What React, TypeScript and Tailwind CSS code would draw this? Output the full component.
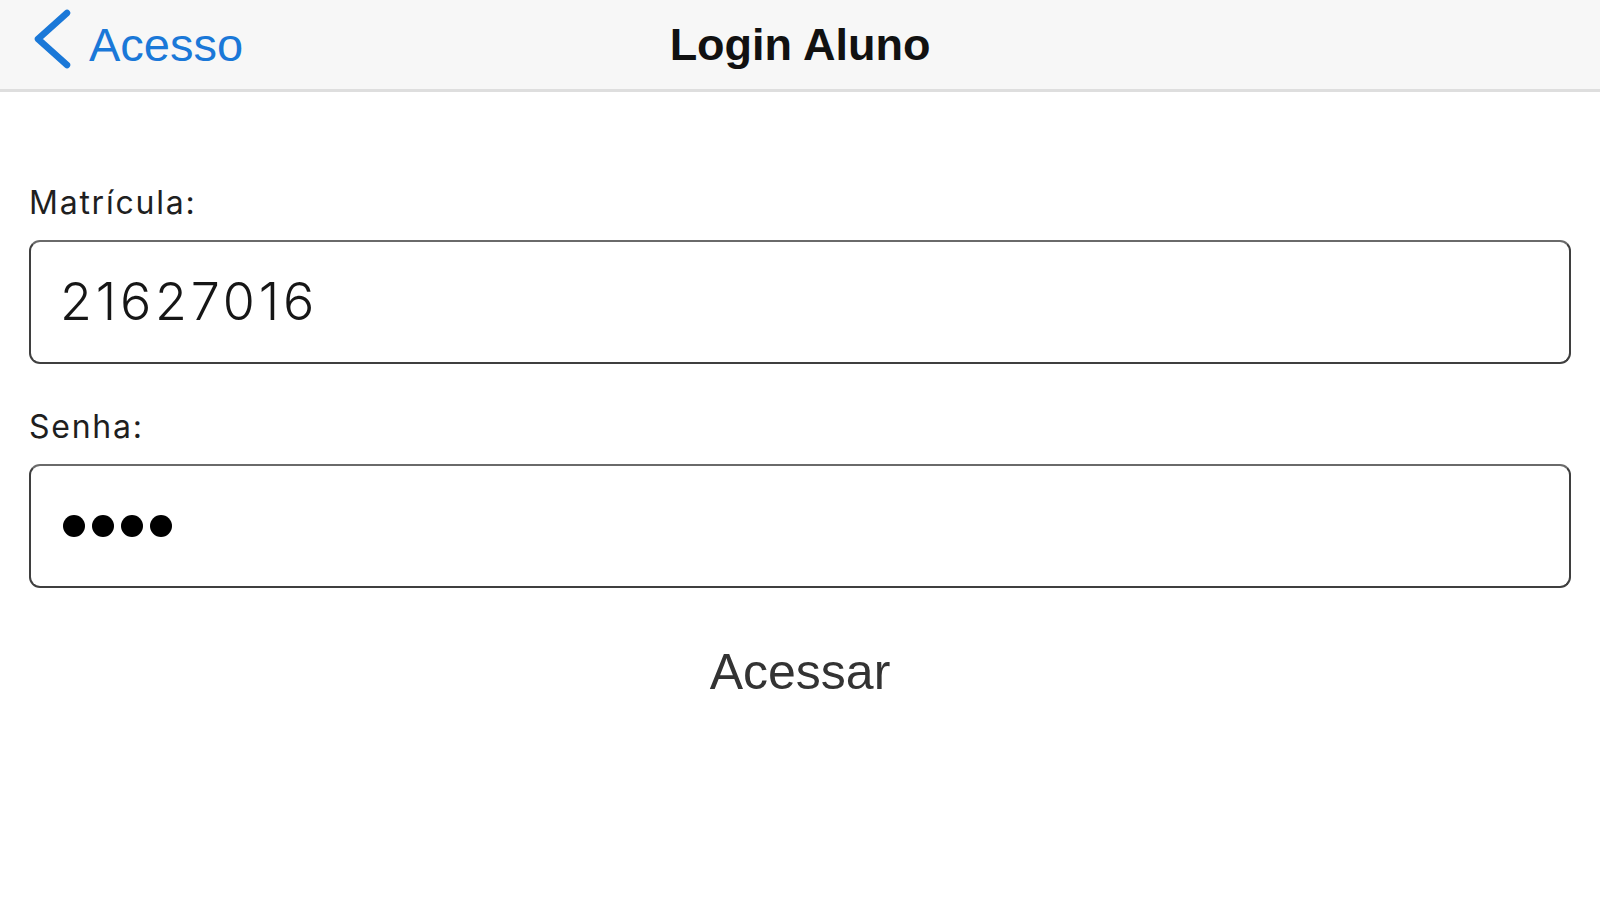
import React from 'react'

function BackChevron() {
  return (
    <svg width="44" height="89" viewBox="0 0 44 89" className="shrink-0">
      <path
        d="M37 13 L8 39 L37 65"
        fill="none"
        stroke="#1a78d8"
        strokeWidth="6.5"
        strokeLinecap="round"
        strokeLinejoin="round"
      />
    </svg>
  )
}

function Field({ label, children }: { label: string; children: React.ReactNode }) {
  return (
    <div>
      <div className="text-[32px] leading-none tracking-[0.055em] text-[#1f1f1f] font-['Inter',sans-serif]">{label}</div>
      <div className="mt-[21px] h-[124px] rounded-[11px] border-2 border-[#3f3f3f] border-t-[#6a6a6a] bg-white flex items-center pl-[29px]">
        {children}
      </div>
    </div>
  )
}

export default function App() {
  return (
    <div className="w-[1600px] h-[900px] bg-white overflow-hidden">
      {/* Navbar */}
      <header className="h-[92px] bg-[#f7f7f7] border-b-[3px] border-[#dedede] grid grid-cols-[1fr_auto_1fr] items-center">
        <div className="flex items-center pl-[30px] h-full">
          <BackChevron />
          <span className="ml-[15px] text-[47px] leading-none text-[#1a78d8] font-['Liberation_Sans',Arial,sans-serif]">
            Acesso
          </span>
        </div>
        <h1 className="text-[45px] leading-none font-bold text-[#111] font-['Liberation_Sans',Arial,sans-serif]">
          Login Aluno
        </h1>
        <div />
      </header>

      {/* Form */}
      <main className="px-[29px] pt-[95px]">
        <Field label="Matrícula:">
          <span className="text-[52px] leading-none font-light tracking-[3.8px] text-[#161616] font-['Inter',sans-serif]">
            21627016
          </span>
        </Field>

        <div className="mt-[47px]">
          <Field label="Senha:">
            <div className="flex gap-[7px] pl-[3px]">
              <span className="w-[22px] h-[22px] rounded-full bg-black" />
              <span className="w-[22px] h-[22px] rounded-full bg-black" />
              <span className="w-[22px] h-[22px] rounded-full bg-black" />
              <span className="w-[22px] h-[22px] rounded-full bg-black" />
            </div>
          </Field>
        </div>

        <div className="mt-[59px] flex justify-center">
          <button className="text-[50px] leading-none text-[#333] font-['Liberation_Sans',Arial,sans-serif]">
            Acessar
          </button>
        </div>
      </main>
    </div>
  )
}
